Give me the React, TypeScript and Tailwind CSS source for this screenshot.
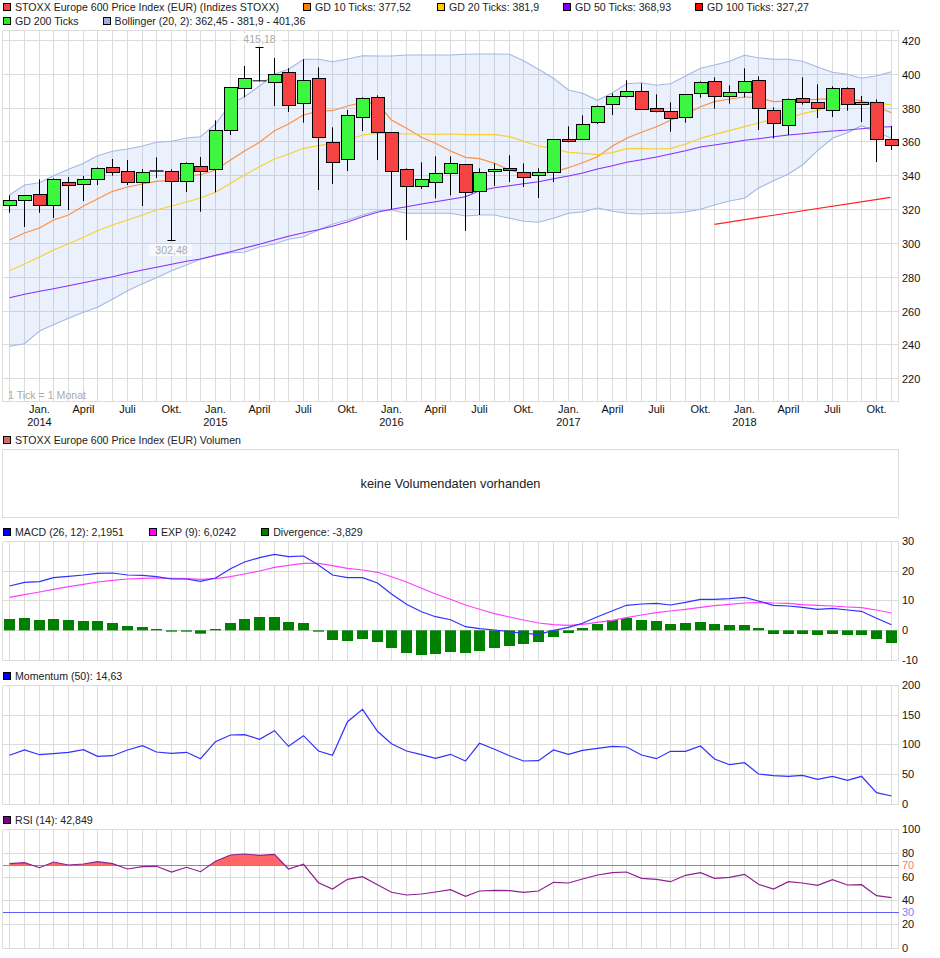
import React from "react";

// month positions, read at 3x off the chart (left half, then right half from x=470)
const LEFT = [28,73,118,160,205,250,293,337,382,427,469,514,559,601,646,691,733,778,823,865,910,955,997,1042,1087,1131,1175,1219,1263,1306,1351,1396];
const RIGHT = [28,73,118,160,205,250,295,337,382,427,469,514,559,601,646,691,733,778,823,865,910,955,997,1042,1087,1131,1175,1219,1263];
const XS = [...LEFT.map(v => Math.floor(v / 3) + 0.5), ...RIGHT.map(v => Math.floor(v / 3 + 470) + 0.5)];

const LABELS = ["Jan.", "April", "Juli", "Okt."];

// kind, body top, body bottom, high, low (all y*3)
type Candle = [string, number, number, number, number];
const CANDLES: Candle[] = [
  ["g",601,617,586,638],["g",586,601,586,681],["r",583,617,538,638],["g",538,617,535,654],
  ["r",547,556,531,630],["g",538,553,528,603],["g",505,538,502,555],["r",502,517,477,527],
  ["r",514,547,480,555],["g",517,547,507,618],["d",511,515,472,534],["r",514,544,508,722],
  ["g",490,544,487,576],["r",499,514,471,635],["g",391,508,361,577],["g",262,391,262,405],
  ["g",235,265,198,292],["d",241,244,142,244],["g",223,247,174,318],["r",217,316,205,336],
  ["g",241,310,178,368],["r",235,412,202,570],["r",427,487,382,552],["g",346,478,330,513],
  ["g",295,352,292,393],["r",292,397,286,480],["r",397,514,397,628],["r",508,559,505,720],
  ["g",538,559,487,567],["g",520,547,469,595],["g",490,520,469,586],["r",493,577,493,693],
  ["g",517,574,505,645],["g",508,514,490,558],["r",505,511,466,546],["r",517,532,490,561],
  ["g",517,526,505,594],["g",418,517,418,546],["r",418,424,379,427],["g",373,418,346,418],
  ["g",319,367,316,372],["g",289,313,280,345],["g",274,289,241,293],["r",274,328,250,328],
  ["r",325,334,283,337],["r",334,355,307,395],["g",283,352,283,368],["g",247,280,244,293],
  ["r",244,289,232,326],["g",277,289,256,311],["g",244,277,205,292],["r",241,325,229,390],
  ["r",331,370,322,415],["g",298,376,295,405],["r",295,307,232,314],["r",307,325,253,354],
  ["g",265,331,259,351],["r",265,313,262,332],["g",307,313,288,366],["r",307,418,298,486],
  ["r",418,436,378,450],
];

const BOLL_TOP = [585,555,548,527,508,490,467,454,447,438,427,424,414,410,372,312,290,258,222,208,178,178,185,177,167,168,168,165,165,165,165,163,162,162,163,182,208,235,270,280,301,278,251,248,256,251,228,205,195,184,166,173,178,178,184,201,217,223,235,227,215];
const BOLL_BOT = [1039,1031,993,974,955,937,922,898,872,851,833,812,795,778,767,758,757,741,732,718,710,690,673,660,645,632,630,640,640,640,640,648,645,645,655,664,667,655,640,636,624,634,640,642,640,640,636,628,615,603,595,564,542,522,495,452,415,398,377,397,415];
const GD10 = [720,699,684,660,645,618,597,574,561,552,544,541,528,524,510,480,453,427,392,372,345,333,332,318,307,310,360,385,412,430,453,472,476,490,510,522,522,516,503,488,470,438,415,397,380,361,343,320,305,297,291,293,305,303,300,298,295,297,302,320,338];
const GD20 = [812,792,771,750,731,712,692,675,660,645,630,618,606,594,577,550,525,500,477,463,445,437,430,420,405,400,400,402,402,403,402,404,404,404,410,424,438,445,457,460,464,458,446,445,447,445,433,415,403,392,380,369,358,355,341,331,318,312,305,308,315];
const GD50 = [893,883,874,866,857,848,839,830,820,810,802,793,784,777,766,755,744,733,720,709,698,689,679,666,650,637,628,620,612,605,598,590,572,563,557,551,545,536,528,519,507,497,487,479,471,462,452,441,435,428,421,416,410,405,401,397,393,390,386,382,380];

const MACD = [198,187,185,173,169,165,160,159,165,166,170,177,177,184,174,146,126,113,103,110,108,135,165,173,173,189,222,253,275,290,299,320,326,330,335,340,343,331,322,310,290,272,256,252,250,255,247,238,238,236,232,243,256,258,262,268,265,270,274,295,314];
const EXP = [232,224,216,208,200,193,186,181,177,175,174,175,176,178,176,170,162,153,142,136,130,130,137,145,150,157,170,186,205,222,238,255,268,281,291,300,309,314,316,313,307,301,293,285,278,273,268,262,257,253,249,247,249,250,254,256,258,261,263,270,279];
const DIV = [297,294,300,297,300,303,303,309,318,321,327,335,335,341,327,309,297,291,291,306,309,335,360,363,357,366,384,399,405,402,396,399,393,384,378,372,366,351,339,324,312,300,294,300,303,312,309,306,312,315,315,324,342,342,342,345,342,345,345,357,369];
const MOM = [256,240,254,251,247,239,259,257,240,227,246,250,247,266,215,195,194,208,182,229,197,243,256,155,118,184,221,243,254,265,253,273,220,238,257,273,272,240,253,241,235,229,231,255,266,244,244,228,267,284,278,312,317,319,316,328,319,331,319,368,378];
const RSI = [161,158,173,156,165,162,155,161,177,170,169,186,172,185,154,135,132,136,133,177,163,218,237,208,200,224,247,255,252,246,239,259,243,241,242,247,243,217,219,207,195,188,186,205,208,215,196,188,205,202,193,223,237,215,219,226,209,225,224,257,263];

function pts(ys: number[], off = 0) {
  return ys.map((y, i) => `${XS[i]},${(y / 3 + off).toFixed(1)}`).join(" ");
}

function Legend({ color, className, children }: { color: string; className?: string; children: React.ReactNode }) {
  return (
    <span className={`flex items-center gap-[4px] ${className ?? ""}`}>
      <span className={`w-[8px] h-[8px] border border-black ${color}`} />
      <span>{children}</span>
    </span>
  );
}

function Grid({ hs, top, bottom }: { hs: number[]; top: number; bottom: number }) {
  return (
    <g stroke="#dcdcdc" strokeWidth="1" shapeRendering="crispEdges">
      {XS.map(x => <line key={x} x1={x} x2={x} y1={top} y2={bottom} />)}
      {hs.map(y => <line key={y} x1="2.5" x2="898.5" y1={y} y2={y} />)}
      <line x1="2.5" x2="2.5" y1={top} y2={bottom} />
      <line x1="898.5" x2="898.5" y1={top} y2={bottom} />
    </g>
  );
}

function AxisLabels({ items }: { items: [string, number, string?][] }) {
  return (
    <g className="text-[11px]">
      {items.map(([t, y, c]) => (
        <text key={t} x="902" y={y + 4} fill={c ?? "#111"}>{t}</text>
      ))}
    </g>
  );
}

function PriceChart() {
  const y = (v: number) => v / 3;
  const ticks: [string, number][] = [["420",40.5],["400",74.5],["380",108.5],["360",141.5],["340",175.5],["320",209.5],["300",243.5],["280",277.5],["260",311.5],["240",344.5],["220",378.5]];
  const band = BOLL_TOP.map((v, i) => `${XS[i]},${y(v).toFixed(1)}`).concat(
    BOLL_BOT.map((v, i) => `${XS[i]},${y(v).toFixed(1)}`).reverse()
  ).join(" ");
  return (
    <svg width="940" height="402" viewBox="0 30 940 402" className="block">
      <Grid hs={[30.5, ...ticks.map(t => t[1]), 401.5]} top={30.5} bottom={401.5} />
      <polygon points={band} fill="#4678e6" fillOpacity="0.115" />
      <polyline points={pts(BOLL_TOP)} fill="none" stroke="#a3b9e4" strokeWidth="1.1" />
      <polyline points={pts(BOLL_BOT)} fill="none" stroke="#a3b9e4" strokeWidth="1.1" />
      <polyline points={pts(GD10)} fill="none" stroke="#ff9040" strokeWidth="1.2" />
      <polyline points={pts(GD20)} fill="none" stroke="#f8d030" strokeWidth="1.2" />
      <polyline points={pts(GD50)} fill="none" stroke="#8a2cff" strokeWidth="1.1" />
      <polyline points="714.5,224.3 890.5,197.3" fill="none" stroke="#ff2020" strokeWidth="1.2" />

      {CANDLES.map(([k, t, b, h, l], i) => {
        const x = XS[i];
        return (
          <g key={x}>
            <line x1={x} x2={x} y1={y(h)} y2={y(l)} stroke="#000" strokeWidth="1" />
            {k === "d" ? (
              <rect x={x - 7} y={y(t)} width="14" height={y(b) - y(t)} fill="#000" />
            ) : (
              <rect
                x={x - 6.5}
                y={Math.round(y(t)) + 0.5}
                width="13"
                height={Math.round(y(b) - y(t))}
                fill={k === "g" ? "#3df640" : "#f54242"}
                stroke="#000"
                strokeWidth="1"
                shapeRendering="crispEdges"
              />
            )}
          </g>
        );
      })}

      {/* high and low markers */}
      <line x1="255.5" x2="263.5" y1="47.5" y2="47.5" stroke="#000" />
      <line x1="167.5" x2="175.5" y1="240.5" y2="240.5" stroke="#000" />
      <rect x="237" y="33" width="45" height="12" fill="#fff" fillOpacity="0.6" />
      <rect x="149" y="244" width="43" height="12" fill="#fff" fillOpacity="0.6" />
      <text x="259.5" y="43" textAnchor="middle" fill="#aaa" className="text-[10.6px]">415,18</text>
      <text x="171.5" y="254" textAnchor="middle" fill="#aaa" className="text-[10.6px]">302,48</text>
      <text x="8" y="399" fill="#aaa" className="text-[10.6px]">1 Tick = 1 Monat</text>

      <AxisLabels items={ticks} />
      <g className="text-[11px]" fill="#111" textAnchor="middle">
        {XS.map((x, i) =>
          i >= 2 && (i - 2) % 3 === 0 ? (
            <text key={x} x={x} y="413">{LABELS[((i - 2) / 3) % 4]}</text>
          ) : null
        )}
        {[2, 14, 26, 38, 50].map((i, n) => (
          <text key={i} x={XS[i]} y="426">{2014 + n}</text>
        ))}
      </g>
    </svg>
  );
}

function MacdChart() {
  return (
    <svg width="940" height="127" viewBox="0 541 940 127" className="block overflow-visible">
      <Grid hs={[541.5, 571.5, 600.5, 630.5, 660.5]} top={541.5} bottom={660.5} />
      {DIV.map((v, i) => {
        const top = Math.min(v, 331) / 3 + 520;
        const bot = Math.max(v, 331) / 3 + 520;
        return <rect key={i} x={XS[i] - 5.5} y={top} width="11" height={bot - top} fill="#008000" />;
      })}
      <polyline points={pts(EXP, 520)} fill="none" stroke="#ff40ff" strokeWidth="1.2" />
      <polyline points={pts(MACD, 520)} fill="none" stroke="#3030ff" strokeWidth="1.2" />
      <AxisLabels items={[["30",541],["20",571],["10",600],["0",630],["-10",660]]} />
    </svg>
  );
}

function MomentumChart() {
  return (
    <svg width="940" height="127" viewBox="0 685 940 127" className="block overflow-visible">
      <Grid hs={[685.5, 715.5, 744.5, 774.5, 804.5]} top={685.5} bottom={804.5} />
      <polyline points={pts(MOM, 670)} fill="none" stroke="#3030ff" strokeWidth="1.2" />
      <AxisLabels items={[["200",685],["150",715],["100",744],["50",774],["0",804]]} />
    </svg>
  );
}

function RsiChart() {
  const line70 = 865.5;
  return (
    <svg width="940" height="129" viewBox="0 829 940 129" className="block overflow-visible">
      <defs>
        <clipPath id="above70">
          <rect x="0" y="829" width="940" height={line70 - 829} />
        </clipPath>
      </defs>
      <Grid hs={[829.5, 853.5, 877.5, 900.5, 924.5, 948.5]} top={829.5} bottom={948.5} />
      <polygon
        points={`${XS[0]},${line70} ${pts(RSI, 810)} ${XS[60]},${line70}`}
        fill="#ff6666"
        clipPath="url(#above70)"
      />
      <line x1="2.5" x2="898.5" y1={line70} y2={line70} stroke="#e86666" shapeRendering="crispEdges" />
      <line x1="2.5" x2="898.5" y1="912.5" y2="912.5" stroke="#5f5ff5" shapeRendering="crispEdges" />
      <polyline points={pts(RSI, 810)} fill="none" stroke="#8e1f8e" strokeWidth="1.2" />
      <AxisLabels
        items={[["100",829],["80",853],["70",865,"#ff7777"],["60",877],["40",900],["30",912,"#8080ff"],["20",924],["0",948]]}
      />
    </svg>
  );
}

export default function App() {
  return (
    <div className="w-[940px] h-[958px] bg-white overflow-hidden text-[10.6px] leading-[14px] text-[#222] font-['Liberation_Sans',sans-serif]">
      <div className="h-[30px] px-[3px]">
        <div className="flex gap-[24px] h-[14px]">
          <Legend color="bg-[#f54242]">STOXX Europe 600 Price Index (EUR) (Indizes STOXX)</Legend>
          <Legend color="bg-[#ff8000]">GD 10 Ticks: 377,52</Legend>
          <Legend color="bg-[#ffcc00]" className="ml-[2px]">GD 20 Ticks: 381,9</Legend>
          <Legend color="bg-[#8000ff]">GD 50 Ticks: 368,93</Legend>
          <Legend color="bg-[#ff0000]">GD 100 Ticks: 327,27</Legend>
        </div>
        <div className="flex gap-[24px] h-[14px]">
          <Legend color="bg-[#20f020]">GD 200 Ticks</Legend>
          <Legend color="bg-[#9ab3e0]">Bollinger (20, 2): 362,45 - 381,9 - 401,36</Legend>
        </div>
      </div>
      <PriceChart />

      <div className="h-[16px] mb-[1px] px-[3px] flex">
        <Legend color="bg-[#d46a6a]">STOXX Europe 600 Price Index (EUR) Volumen</Legend>
      </div>
      <div className="ml-[2px] w-[897px] h-[69px] border border-[#dcdcdc] flex items-center justify-center text-[12.8px]">
        keine Volumendaten vorhanden
      </div>

      <div className="h-[23px] pt-[5px] px-[3px] flex gap-[25px]">
        <Legend color="bg-[#0000ff]">MACD (26, 12): 2,1951</Legend>
        <Legend color="bg-[#ff00ff]">EXP (9): 6,0242</Legend>
        <Legend color="bg-[#008000]">Divergence: -3,829</Legend>
      </div>
      <MacdChart />

      <div className="h-[16px] mb-[1px] px-[3px] flex">
        <Legend color="bg-[#0000ff]">Momentum (50): 14,63</Legend>
      </div>
      <MomentumChart />

      <div className="h-[16px] mb-[1px] px-[3px] flex">
        <Legend color="bg-[#800080]">RSI (14): 42,849</Legend>
      </div>
      <RsiChart />
    </div>
  );
}
